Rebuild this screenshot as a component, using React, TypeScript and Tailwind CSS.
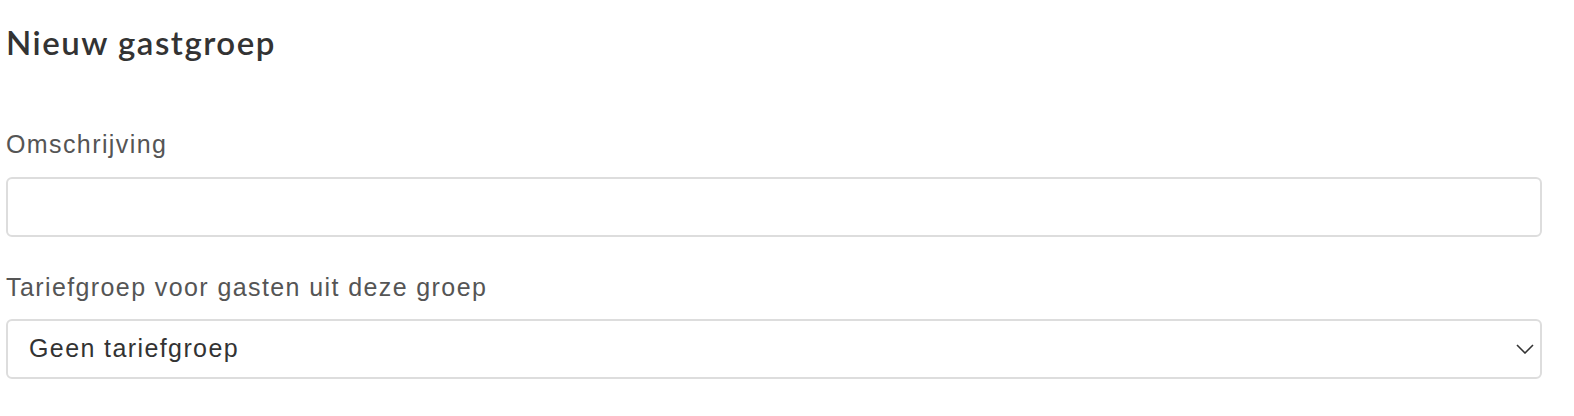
export default function App() {
  return (
    <div className="w-full bg-white pl-[6px] pr-[32px] pt-[22px] font-['Liberation_Sans',Arial,sans-serif]">
      <h1 className="font-['Lato',sans-serif] text-[33px] font-semibold leading-[40px] tracking-[1.5px] text-[#333]">
        Nieuw gastgroep
      </h1>
      <div className="mt-[66px] flex flex-col">
        <label className="text-[25px] leading-[32px] tracking-[1.4px] text-[#555]">Omschrijving</label>
        <input
          type="text"
          className="mt-[17px] h-[60px] w-full rounded-[6px] border-2 border-[#ddd] bg-white px-[21px] text-[25px] tracking-[1.4px] text-[#333] outline-none"
        />
      </div>
      <div className="mt-[34px] flex flex-col">
        <label className="text-[25px] leading-[32px] tracking-[1.4px] text-[#555]">
          Tariefgroep voor gasten uit deze groep
        </label>
        <div className="relative mt-[16px]">
          <select className="h-[60px] w-full appearance-none rounded-[6px] border-2 border-[#ddd] bg-white px-[21px] text-[25px] tracking-[1.4px] text-[#333] outline-none">
            <option>Geen tariefgroep</option>
          </select>
          <svg
            className="pointer-events-none absolute right-[8px] top-1/2 -translate-y-1/2"
            width="18"
            height="10"
            viewBox="0 0 18 10"
            fill="none"
            stroke="#333"
            strokeWidth="1.6"
          >
            <path d="M1 1l8 8 8-8" />
          </svg>
        </div>
      </div>
    </div>
  );
}
